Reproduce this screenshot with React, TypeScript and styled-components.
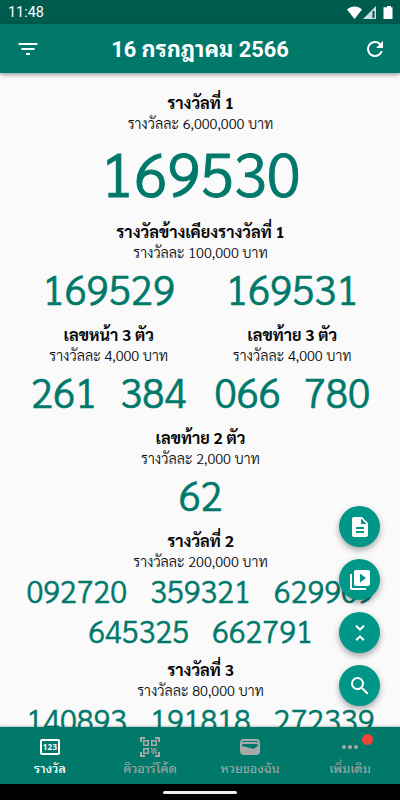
import React from "react";
import styled, { createGlobalStyle } from "styled-components";

const Global = createGlobalStyle`
  * { box-sizing: border-box; }
  body { margin: 0; background: #fafafa; }
`;

const Screen = styled.div`
  width: 400px;
  height: 800px;
  display: flex;
  flex-direction: column;
  position: relative;
  overflow: hidden;
  background: #fafafa;
  color: #080808;
  font-family: Sarabun, Lato, "Noto Sans Thai Looped", sans-serif;
`;

const StatusBar = styled.div`
  height: 24px;
  flex: none;
  display: flex;
  align-items: center;
  justify-content: space-between;
  padding: 2px 7px 0 8px;
  background: #005b4f;
  color: #fff;
  font: 14.4px/22px Roboto, sans-serif;
`;

const StatusIcons = styled.svg`
  display: block;
`;

const AppBar = styled.header`
  height: 49px;
  flex: none;
  display: grid;
  grid-template-columns: 24px 1fr 24px;
  align-items: center;
  padding: 0 13px 0 16px;
  background: #00796b;
  color: #fff;
  box-shadow: 0 2px 4px rgba(0, 0, 0, 0.35);
  z-index: 2;
`;

const Heading = styled.h1`
  margin: 0;
  padding: 2px 3px 0 0;
  text-align: center;
  font: 700 21.8px/32px Roboto, "Noto Sans Thai Looped", sans-serif;
  white-space: nowrap;
`;

const Icon = styled.svg<{ $size?: number }>`
  display: block;
  width: ${(p) => p.$size ?? 24}px;
  height: ${(p) => p.$size ?? 24}px;
  fill: currentColor;
`;

const Results = styled.main`
  flex: 1;
  min-height: 0;
  overflow: hidden;
  padding: 20px 16px 0 17px;
`;

const Prize = styled.section`
  display: flex;
  flex-direction: column;
  align-items: center;
  padding-bottom: 10px;
`;

const Pair = styled.div`
  display: grid;
  grid-template-columns: 1fr 1fr;
`;

const PrizeName = styled.h2`
  margin: 0;
  height: 20px;
  font-size: 16.25px;
  line-height: 20px;
  font-weight: 700;
  white-space: nowrap;
`;

const PrizeValue = styled.p`
  margin: 0;
  height: 19px;
  font-size: 14.4px;
  font-weight: 300;
  line-height: 21px;
  white-space: nowrap;
`;

const sizes = {
  large: { font: 61, line: 80, gap: 0 },
  medium: { font: 40.6, line: 54, gap: 23 },
  small: { font: 30.8, line: 40, gap: 23 },
};

const Numbers = styled.div<{ $size: keyof typeof sizes; $wide?: boolean }>`
  width: 100%;
  display: flex;
  flex-wrap: wrap;
  justify-content: ${(p) => (p.$wide ? "space-around" : "center")};
  column-gap: ${(p) => (p.$wide ? 0 : sizes[p.$size].gap)}px;
  color: #00796b;
  font-size: ${(p) => sizes[p.$size].font}px;
  font-weight: 300;
  -webkit-text-stroke: 0.016em #00796b;
  line-height: ${(p) => sizes[p.$size].line}px;
`;

const Fabs = styled.div`
  position: absolute;
  right: 20px;
  top: 506px;
  display: grid;
  gap: 12px;
  z-index: 3;
`;

const Fab = styled.button`
  width: 41px;
  height: 41px;
  padding: 0;
  border: 0;
  border-radius: 50%;
  display: grid;
  place-items: center;
  color: #fff;
  background: #009688;
  box-shadow: 0 3px 6px rgba(0, 0, 0, 0.35);
`;

const BottomNav = styled.nav`
  height: 57px;
  flex: none;
  display: grid;
  grid-template-columns: repeat(4, 1fr);
  background: #00796b;
  box-shadow: 0 -1px 2px rgba(0, 0, 0, 0.25);
  z-index: 2;
`;

const Tab = styled.div<{ $active?: boolean }>`
  position: relative;
  display: flex;
  flex-direction: column;
  align-items: center;
  padding-top: 8px;
  color: ${(p) => (p.$active ? "#fff" : "#a9a9a9")};
  font: 12.7px/18px Roboto, "Noto Sans Thai Looped", sans-serif;
  font-weight: ${(p) => (p.$active ? 500 : 400)};
  white-space: nowrap;
`;

const TabIcon = styled.div`
  height: 24px;
  display: grid;
  place-items: center;
`;

const TabLabel = styled.span`
  margin-top: 1px;
`;

const Dot = styled.span`
  position: absolute;
  left: 62px;
  top: 7px;
  width: 11px;
  height: 11px;
  border-radius: 50%;
  background: #f44336;
`;

const NumbersBox = styled.div`
  width: 20px;
  height: 16px;
  border: 2px solid currentColor;
  border-radius: 2px;
  display: flex;
  justify-content: center;
  font: 700 8px/12px "Open Sans", sans-serif;
  letter-spacing: 0.3px;
`;

const GestureBar = styled.div`
  height: 16px;
  flex: none;
  display: flex;
  justify-content: center;
  padding-top: 7px;
  background: #000;
`;

const Handle = styled.div`
  width: 74px;
  height: 3px;
  border-radius: 2px;
  background: #eee;
`;

type Info = {
  name: string;
  value: string;
  numbers: string[];
  size: keyof typeof sizes;
  wide?: boolean;
};

const PrizeBlock = ({ name, value, numbers, size, wide }: Info) => (
  <Prize>
    <PrizeName>{name}</PrizeName>
    <PrizeValue>รางวัลละ {value} บาท</PrizeValue>
    <Numbers $size={size} $wide={wide}>
      {numbers.map((n) => (
        <span key={n}>{n}</span>
      ))}
    </Numbers>
  </Prize>
);

const paths = {
  filter: "M10 18h4v-2h-4v2zM2.500 6v2h19V6h-19zm3 7h13v-2h-13v2z",
  refresh:
    "M17.650 6.350A7.960 7.960 0 0 0 12 4a8 8 0 1 0 7.730 10h-2.080A6 6 0 1 1 12 6c1.660 0 3.140.69 4.220 1.780L13 11h7V4l-2.350 2.350z",
  document:
    "M14 2H6c-1.100 0-1.990.9-1.990 2L4 20c0 1.100.89 2 1.990 2H18c1.100 0 2-.9 2-2V8l-6-6zm2 16H8v-2h8v2zm0-4H8v-2h8v2zm-3-5V3.500L18.500 9H13z",
  video:
    "M4 6H2v14c0 1.100.9 2 2 2h14v-2H4V6zm16-4H8c-1.100 0-2 .9-2 2v12c0 1.100.9 2 2 2h12c1.100 0 2-.9 2-2V4c0-1.100-.9-2-2-2zm-8 12.500v-9l6 4.500-6 4.500z",
  collapse:
    "M7.410 18.590L8.830 20 12 16.830 15.170 20l1.410-1.410L12 14l-4.590 4.590zm9.180-13.180L15.170 4 12 7.170 8.830 4 7.410 5.410 12 10l4.590-4.590z",
  search:
    "M15.500 14h-.79l-.28-.27A6.470 6.470 0 0 0 16 9.500 6.500 6.500 0 1 0 9.500 16c1.610 0 3.090-.59 4.230-1.570l.27.28v.79l5 4.990L20.490 19l-4.990-5zm-6 0C7.010 14 5 11.990 5 9.500S7.010 5 9.500 5 14 7.010 14 9.500 11.990 14 9.500 14z",
  dots: "M6 10a2 2 0 1 0 0 4 2 2 0 0 0 0-4zm12 0a2 2 0 1 0 0 4 2 2 0 0 0 0-4zm-6 0a2 2 0 1 0 0 4 2 2 0 0 0 0-4z",
};

const Glyph = ({ name, size }: { name: keyof typeof paths; size?: number }) => (
  <Icon $size={size} viewBox="0 0 24 24">
    <path d={paths[name]} />
  </Icon>
);

const QrIcon = () => (
  <Icon $size={20} viewBox="0 0 20 20">
    <path
      fill="none"
      stroke="currentColor"
      strokeWidth="2"
      d="M1 5V1h4M15 1h4v4M19 15v4h-4M5 19H1v-4"
    />
    <path
      fill="none"
      stroke="currentColor"
      strokeWidth="1.500"
      d="M3.750 3.750h4.500v4.500h-4.500zM11.750 3.750h4.500v4.500h-4.500zM3.750 11.750h4.500v4.500h-4.500z"
    />
    <path d="M11 11h1.500v1.500H11zM14 11h1.500v1.500H14zM12.500 12.500H14V14h-1.500zM15.500 12.500H17V14h-1.500zM11 14h1.500v1.500H11zM14 14h1.500v1.500H14zM12.500 15.500H14V17h-1.500zM15.500 15.500H17V17h-1.500z" />
  </Icon>
);

const WalletIcon = () => (
  <Icon $size={20} viewBox="0 0 20 20">
    <path
      fillRule="evenodd"
      d="M4 2h12a4 4 0 0 1 4 4v8a4 4 0 0 1-4 4H4a4 4 0 0 1-4-4V6a4 4 0 0 1 4-4zM2 5.700C2.600 5.200 3.300 5 4 5h12c.7 0 1.400.2 2 .7V5.500C17.600 4.500 17 4 16 4H4c-1 0-1.600.5-2 1.500zM2 8.200v.9l10.800 2.700c.5.100 1 0 1.400-.3L18 8.700v-.5c-.2-.8-1-1.200-2-1.200H4c-1 0-1.800.4-2 1.200z"
    />
  </Icon>
);

export default function App() {
  return (
    <Screen>
      <Global />
      <StatusBar>
        <span>11:48</span>
        <StatusIcons width="46" height="14" viewBox="0 0 46 14" fill="#fff">
          <path d="M0 3.500C4.500-.5 11-.5 15 3.500L7.500 13z" />
          <path d="M29 0v13H16z" opacity=".8" />
          <path d="M25.500 5h2v7h-2z" fill="#005b4f" />
          <path d="M38 1.200h2V0h4v1.200h1.500V13h-9V1.200z" />
        </StatusIcons>
      </StatusBar>
      <AppBar>
        <Glyph name="filter" />
        <Heading>16 กรกฎาคม 2566</Heading>
        <Glyph name="refresh" />
      </AppBar>
      <Results>
        <PrizeBlock name="รางวัลที่ 1" value="6,000,000" numbers={["169530"]} size="large" />
        <PrizeBlock
          name="รางวัลข้างเคียงรางวัลที่ 1"
          value="100,000"
          numbers={["169529", "169531"]}
          size="medium"
          wide
        />
        <Pair>
          <PrizeBlock name="เลขหน้า 3 ตัว" value="4,000" numbers={["261", "384"]} size="medium" />
          <PrizeBlock name="เลขท้าย 3 ตัว" value="4,000" numbers={["066", "780"]} size="medium" />
        </Pair>
        <PrizeBlock name="เลขท้าย 2 ตัว" value="2,000" numbers={["62"]} size="medium" />
        <PrizeBlock
          name="รางวัลที่ 2"
          value="200,000"
          numbers={["092720", "359321", "629909", "645325", "662791"]}
          size="small"
        />
        <PrizeBlock
          name="รางวัลที่ 3"
          value="80,000"
          numbers={["140893", "191818", "272339"]}
          size="small"
        />
      </Results>
      <BottomNav>
        <Tab $active>
          <TabIcon>
            <NumbersBox>123</NumbersBox>
          </TabIcon>
          <TabLabel>รางวัล</TabLabel>
        </Tab>
        <Tab>
          <TabIcon>
            <QrIcon />
          </TabIcon>
          <TabLabel>คิวอาร์โค้ด</TabLabel>
        </Tab>
        <Tab>
          <TabIcon>
            <WalletIcon />
          </TabIcon>
          <TabLabel>หวยของฉัน</TabLabel>
        </Tab>
        <Tab>
          <TabIcon>
            <Glyph name="dots" />
          </TabIcon>
          <Dot />
          <TabLabel>เพิ่มเติม</TabLabel>
        </Tab>
      </BottomNav>
      <GestureBar>
        <Handle />
      </GestureBar>
      <Fabs>
        <Fab><Glyph name="document" /></Fab>
        <Fab><Glyph name="video" /></Fab>
        <Fab><Glyph name="collapse" /></Fab>
        <Fab><Glyph name="search" /></Fab>
      </Fabs>
    </Screen>
  );
}
